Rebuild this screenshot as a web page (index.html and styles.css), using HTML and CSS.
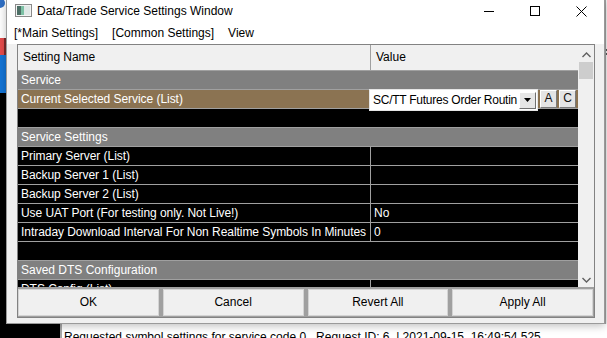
FILE: index.html
```html
<!DOCTYPE html>
<html lang="en">
<head>
    <meta charset="UTF-8">
    <meta name="viewport" content="width=device-width, initial-scale=1.0">
    <title>Data/Trade Service Settings Window</title>
    <link rel="stylesheet" href="styles.css">
</head>
<body>
    <div class="desktop">
        <div class="desk-main">
            <div class="desk-left">
                <div class="strip-white"><span class="strip-dot"></span></div>
                <div class="strip-red"></div>
                <div class="strip-blue"></div>
                <div class="strip-black"></div>
            </div>
            <div class="desk-mid"></div>
            <div class="desk-right"><span class="right-mark"></span></div>
        </div>
        <div class="status-row">
            <div class="status-black"></div>
            <div class="status-text">Requested symbol settings for service code 0.&nbsp; Request ID: 6. | 2021-09-15&nbsp; 16:49:54.525</div>
        </div>

        <div class="window">
            <div class="titlebar">
                <svg class="app-icon" width="17" height="13" viewBox="0 0 17 13">
                    <rect x="0.5" y="0.5" width="16" height="12" fill="#f4f4f4" stroke="#8a8a8a"/>
                    <rect x="2" y="2" width="4" height="9" fill="#4d6f66"/>
                    <rect x="6" y="2" width="3" height="9" fill="#7cc0a4"/>
                    <rect x="9" y="2" width="6" height="9" fill="#dfe8e6"/>
                </svg>
                <span class="title">Data/Trade Service Settings Window</span>
                <div class="controls">
                    <div class="ctl"><svg width="10" height="10" viewBox="0 0 10 10"><path d="M0 5.5h10" stroke="#000" stroke-width="1"/></svg></div>
                    <div class="ctl"><svg width="10" height="10" viewBox="0 0 10 10"><rect x="0.5" y="0.5" width="9" height="9" fill="none" stroke="#000"/></svg></div>
                    <div class="ctl"><svg width="11" height="11" viewBox="0 0 11 11"><path d="M0.5 0.5l10 10M10.5 0.5l-10 10" stroke="#000" stroke-width="1"/></svg></div>
                </div>
            </div>
            <div class="menubar">
                <span class="menu-item">[*Main Settings]</span>
                <span class="menu-item">[Common Settings]</span>
                <span class="menu-item">View</span>
            </div>
            <div class="body">
                <div class="frame">
                    <div class="table-area">
                        <div class="table">
                            <div class="row head">
                                <div class="cell name">Setting Name</div>
                                <div class="cell">Value</div>
                            </div>
                            <div class="row section">Service</div>
                            <div class="row selected">
                                <div class="cell name">Current Selected Service (List)</div>
                                <div class="cell value-edit">
                                    <div class="editor">
                                        <div class="combo">
                                            <span class="combo-text">SC/TT Futures Order Routin</span>
                                            <span class="combo-btn">
                                                <svg width="7" height="4" viewBox="0 0 7 4"><path d="M0 0h7L3.5 4z" fill="#000"/></svg>
                                            </span>
                                        </div>
                                        <span class="mini-btn">A</span>
                                        <span class="mini-btn">C</span>
                                    </div>
                                </div>
                            </div>
                            <div class="row blank"></div>
                            <div class="row section">Service Settings</div>
                            <div class="row">
                                <div class="cell name">Primary Server (List)</div>
                                <div class="cell"></div>
                            </div>
                            <div class="row">
                                <div class="cell name">Backup Server 1 (List)</div>
                                <div class="cell"></div>
                            </div>
                            <div class="row">
                                <div class="cell name">Backup Server 2 (List)</div>
                                <div class="cell"></div>
                            </div>
                            <div class="row">
                                <div class="cell name">Use UAT Port (For testing only. Not Live!)</div>
                                <div class="cell">No</div>
                            </div>
                            <div class="row">
                                <div class="cell name">Intraday Download Interval For Non Realtime Symbols In Minutes</div>
                                <div class="cell">0</div>
                            </div>
                            <div class="row blank"></div>
                            <div class="row section">Saved DTS Configuration</div>
                            <div class="row">
                                <div class="cell name">DTS Config (List)</div>
                                <div class="cell"></div>
                            </div>
                        </div>
                        <div class="scrollbar">
                            <svg class="arrow" width="9" height="6" viewBox="0 0 9 6"><path d="M0.5 5L4.5 1L8.5 5" fill="none" stroke="#606060" stroke-width="1.4"/></svg>
                            <div class="thumb"></div>
                            <div class="track"></div>
                            <svg class="arrow" width="9" height="6" viewBox="0 0 9 6"><path d="M0.5 1L4.5 5L8.5 1" fill="none" stroke="#606060" stroke-width="1.4"/></svg>
                        </div>
                    </div>
                    <div class="buttons">
                        <div class="btn">OK</div>
                        <div class="btn">Cancel</div>
                        <div class="btn">Revert All</div>
                        <div class="btn">Apply All</div>
                    </div>
                </div>
            </div>
        </div>
    </div>
</body>
</html>
```

FILE: styles.css
```css
body {
    margin: 0;
    padding: 0;
    width: 607px;
    height: 338px;
    overflow: hidden;
    background: #000;
    font-family: 'Liberation Sans', Arial, sans-serif;
    font-size: 12px;
}

.desktop {
    position: relative;
    width: 607px;
    height: 338px;
    display: flex;
    flex-direction: column;
}

/* what shows around the dialog */
.desk-main {
    height: 324px;
    display: flex;
}

.desk-left {
    width: 6px;
    display: flex;
    flex-direction: column;
    overflow: hidden;
}

.strip-white {
    height: 38px;
    background: #fff;
}

.strip-dot {
    display: block;
    width: 10px;
    height: 10px;
    margin: -2px 0 0 -5px;
    border-radius: 50%;
    background: #2f6fc4;
}

.strip-red {
    height: 17px;
    background: #e54b4b;
    border-left: 2px solid #e54b4b;
    box-shadow: inset -2px 0 0 #7a2a2a;
}

.strip-blue {
    height: 38px;
    background: #1374d6;
}

.strip-black {
    flex: 1;
    background: #000;
}

.desk-mid {
    flex: 1;
    background: #fff;
}

.desk-right {
    width: 1px;
    background: #f0f0f0;
    border-left: 1px solid #a0a0a0;
    overflow: hidden;
}

.right-mark {
    display: block;
    width: 1px;
    height: 6px;
    margin-top: 49px;
    border-top: 2px solid #555;
    border-bottom: 2px solid #555;
    box-sizing: border-box;
}

.status-row {
    flex: 1;
    display: flex;
    overflow: hidden;
}

.status-black {
    width: 60px;
    background: #000;
    border-right: 2px solid #a7a7a7;
}

.status-text {
    flex: 1;
    background: #fff;
    color: #000;
    padding: 6px 0 0 2px;
    line-height: 15px;
    white-space: nowrap;
}

/* dialog window */
.window {
    position: absolute;
    left: 6px;
    top: 0;
    width: 597px;
    height: 323px;
    background: #f0f0f0;
    border: 1px solid #9a9a9a;
    border-top: none;
    box-shadow: 0 2px 8px rgba(0,0,0,0.25);
    display: flex;
    flex-direction: column;
}

.titlebar {
    height: 22px;
    background: #fff;
    display: flex;
    align-items: center;
}

.app-icon {
    margin: 0 5px 1px 8px;
}

.title {
    flex: 1;
    color: #000;
    font-size: 12px;
}

.controls {
    display: flex;
    height: 22px;
}

.ctl {
    width: 46px;
    display: flex;
    align-items: center;
    justify-content: center;
}

.menubar {
    height: 22px;
    background: #fff;
    display: flex;
    align-items: center;
}

.menu-item {
    padding: 0 7px;
    color: #000;
}

.body {
    flex: 1;
    padding: 0 9px 0 10px;
}

.frame {
    border: 1px solid #828282;
    display: flex;
    flex-direction: column;
}

.table-area {
    height: 242px;
    display: flex;
    background: #000;
}

.table {
    width: 560px;
    overflow: hidden;
}

.row {
    height: 18px;
    border-bottom: 1px solid #a0a0a0;
    display: grid;
    grid-template-columns: 353px 1fr;
    color: #fff;
    line-height: 18px;
    background: #000;
}

.cell {
    padding-left: 3px;
    white-space: nowrap;
    overflow: hidden;
}

.cell.name {
    border-right: 1px solid #a0a0a0;
    letter-spacing: -0.05px;
}

.row.head {
    height: 25px;
    line-height: 25px;
    background: #f0f0f0;
    color: #000;
}

.row.head .cell {
    padding-left: 5px;
}

.row.section {
    display: block;
    background: #808080;
    padding-left: 3px;
}

.row.blank {
    display: block;
}

.row.selected {
    background: #8b7352;
}

.value-edit {
    position: relative;
    overflow: visible;
}

/* in-place editor over the selected row */
.editor {
    position: absolute;
    left: -2px;
    top: -1px;
    display: flex;
    align-items: flex-start;
    gap: 2px;
}

.combo {
    width: 167px;
    height: 20px;
    background: #fff;
    border: 1px solid #e6e6e6;
    display: flex;
    align-items: center;
    color: #000;
}

.combo-text {
    flex: 1;
    padding-left: 3px;
    line-height: 18px;
    letter-spacing: -0.25px;
    overflow: hidden;
    white-space: nowrap;
}

.combo-btn {
    width: 15px;
    height: 15px;
    margin-right: 1px;
    background: #e6e6e6;
    border: 1px solid;
    border-color: #fff #707070 #707070 #fff;
    display: flex;
    align-items: center;
    justify-content: center;
}

.mini-btn {
    width: 15px;
    height: 16px;
    margin-top: 1px;
    background: #e4e4e4;
    border: 1px solid;
    border-color: #fff #7a7a7a #7a7a7a #fff;
    color: #111;
    line-height: 15px;
    text-align: center;
}

.scrollbar {
    width: 16px;
    background: #f0f0f0;
    display: flex;
    flex-direction: column;
    align-items: center;
}

.arrow {
    margin: 7px 0 4px;
}

.thumb {
    width: 14px;
    height: 17px;
    background: #cdcdcd;
}

.track {
    flex: 1;
}

.buttons {
    background: #a0a0a0;
    padding: 2px 1px 1px 0;
    display: flex;
    gap: 4px;
}

.btn {
    flex: 1;
    height: 25px;
    background: #f0f0f0;
    border: 1px solid #d4d4d4;
    color: #000;
    line-height: 25px;
    text-align: center;
}
```
